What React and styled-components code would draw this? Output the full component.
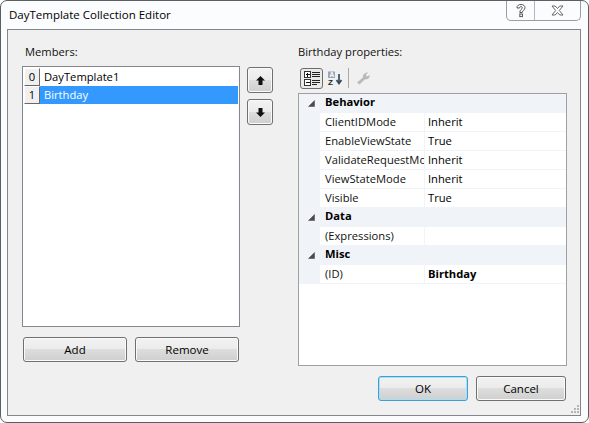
import React from 'react';
import styled, { createGlobalStyle } from 'styled-components';

const Global = createGlobalStyle`
  html, body { margin: 0; padding: 0; background: #fff; }
  * { box-sizing: border-box; }
  body { font-family: "Open Sans", "Noto Sans", "Liberation Sans", sans-serif; font-size: 11.2px; color: #000; }
`;

const Win = styled.div`
  width: 589px; height: 423px; display: flex; flex-direction: column; overflow: hidden;
  border: 1px solid #5c5f62; border-radius: 7px;
  background: #fbfcfd; padding: 0 7px 6px 6px;
`;
const TitleBar = styled.div`
  height: 28px; flex: none; display: flex; justify-content: space-between; align-items: flex-start;
`;
const Title = styled.div`font-size: 11.5px; line-height: 14px; padding: 7px 0 0 2px; white-space: nowrap;`;
const Caps = styled.div`
  display: flex; height: 20px; border: 1px solid #9a9da1; border-top: 0; border-radius: 0 0 5px 5px; background: #fbfcfd;
`;
const Cap = styled.div`
  width: ${p => p.$w}px; display: flex; align-items: center; justify-content: center;
  & + & { border-left: 1px solid #b4b7ba; }
`;
const Panel = styled.div`
  flex: 1; background: #f0f0f0; border: 1px solid #84878a; display: flex; flex-direction: column;
  padding: 15px 14px 14px 14px;
`;
const Main = styled.div`display: flex; height: 321px;`;
const Left = styled.div`width: 218px; display: flex; flex-direction: column; flex: none;`;
const Label = styled.div`font-size: 11.2px; line-height: 14px; height: 21px; padding-left: ${p => p.$pad || 0}px; color: #111;`;
const List = styled.div`
  width: 218px; height: 261px; flex: none; background: #fff; border: 1px solid #828790; padding: 1px;
`;
const Item = styled.div`display: flex; height: 18px; width: 214px;`;
const Index = styled.div`
  width: 16px; height: 18px; flex: none; background: #f0f0f0; text-align: center; line-height: 16px; font-size: 11.2px;
  border: 1px solid; border-color: #fff #696969 #696969 #fff;
`;
const ItemText = styled.div`
  flex: 1; padding-left: 4px; line-height: 17px; font-size: 11.2px; height: 18px;
  background: ${p => p.$sel ? '#3399ff' : '#fff'}; color: ${p => p.$sel ? '#fff' : '#000'};
`;
const Button = styled.div`
  width: ${p => p.$w}px; height: ${p => p.$h || 25}px; flex: none; display: flex; align-items: center; justify-content: center;
  font-size: 11.5px; border-radius: 3px; border: 1px solid ${p => p.$def ? '#3c9fd6' : '#707070'};
  background: linear-gradient(#f2f2f2 0, #ebebeb 50%, #dddddd 50%, #cfcfcf 100%);
  box-shadow: inset 0 0 0 1px ${p => p.$def ? '#a8e0f5' : '#fafafa'};
`;
const LeftButtons = styled.div`display: flex; gap: 8px; margin: 10px 0 0 1px;`;
const MoveColumn = styled.div`
  width: 26px; flex: none; margin: 22px 0 0 7px; display: flex; flex-direction: column; gap: 6px;
`;
const Right = styled.div`width: 269px; flex: none; margin-left: 25px; display: flex; flex-direction: column;`;
const Toolbar = styled.div`height: 24px; display: flex; align-items: center; gap: 1px; margin-bottom: 3px; padding-left: 2px; flex: none;`;
const ToolButton = styled.div`
  width: ${p => p.$w || 22}px; height: 21px; display: flex; align-items: center; justify-content: center;
  border: 1px solid ${p => p.$on ? '#6d6d6d' : 'transparent'}; border-radius: 3px;
  background: ${p => p.$on ? '#eaeaea' : 'transparent'};
`;
const ToolSep = styled.div`width: 1px; height: 20px; background: #a9a9a9; margin: 0 4px 0 1px;`;
const Grid = styled.div`
  width: 269px; height: 273px; flex: none; background: #fff; border: 1px solid #a0a0a0;
`;
const Cat = styled.div`
  height: 19px; display: flex; align-items: center; background: #f0f4f9; font-weight: 700; font-size: 11.2px; padding-bottom: 3px; line-height: 16px;
`;
const Arrow = styled.div`width: 26px; flex: none; display: flex; justify-content: center; padding: 2px 2px 0 0;`;
const Row = styled.div`display: flex; height: 19px; background: #f0f4f9;`;
const Gutter = styled.div`width: 21px; flex: none;`;
const NameCell = styled.div`
  width: 105px; flex: none; background: #fff; padding-left: 5px; line-height: 17px; font-size: 11.2px; overflow: hidden; white-space: nowrap;
  border-right: 1px solid #f0f4f9; border-bottom: 1px solid #f0f4f9; color: #111;
`;
const ValueCell = styled.div`
  flex: 1; background: #fff; padding-left: 3px; line-height: 17px; font-size: 11.2px; white-space: nowrap; font-weight: ${p => p.$b ? 700 : 400};
  border-bottom: 1px solid #f0f4f9;
`;
const FooterWrap = styled.div`position: relative; display: flex; justify-content: flex-end; gap: 8px; margin-top: 10px;`;
const Grip = styled.svg`position: absolute; right: -13px; bottom: -12px;`;

const Tri = () => <svg width="7" height="7" viewBox="0 0 7 7"><path d="M6.5 0.5V6.5H0.5Z" fill="#4a4a4a" stroke="#555" strokeWidth=".6" /></svg>;
const Up = () => <svg width="11" height="11" viewBox="0 0 11 11"><path d="M5.5 1L10 5.5H7.5V10H3.5V5.5H1Z" fill="#111" /></svg>;
const Down = () => <svg width="11" height="11" viewBox="0 0 11 11"><path d="M5.5 10L1 5.5H3.5V1H7.5V5.5H10Z" fill="#111" /></svg>;

const Categorized = () => (
  <svg width="16" height="15" viewBox="0 0 16 15" shapeRendering="crispEdges">
    <rect x=".5" y=".5" width="6" height="6" fill="#fff" stroke="#333" />
    <rect x=".5" y="8.5" width="6" height="6" fill="#fff" stroke="#333" />
    <path d="M2 3.5H5.5M3.5 2V5.5M2 11.5H5.5" stroke="#111" />
    <path d="M8 1.5H16M8 3.5H16M8 5.5H16M8 9.5H16M8 11.5H16M8 13.5H13" stroke="#222" />
  </svg>
);
const Sorted = () => (
  <svg width="16" height="15" viewBox="0 0 16 15">
    <rect x="1" y="0.5" width="7" height="6.5" fill="#9aa7b6" />
    <text x="2.5" y="6" fontSize="6.5" fontWeight="700" fontFamily="Liberation Sans" fill="#fff">A</text>
    <text x="1" y="14" fontSize="8" fontWeight="700" fontFamily="Liberation Sans" fill="#222">Z</text>
    <path d="M12 3V12M9.5 9L12 12.5L14.5 9" stroke="#3a4a5a" strokeWidth="1.7" fill="none" />
  </svg>
);
const Wrench = () => (
  <svg width="15" height="14" viewBox="0 0 15 14">
    <path d="M1 11.5L7 6.5C6.5 4 8.5 1.5 12 1.5L9.8 4L11 5.6L13.8 4C14 7 11.5 9 9 8.3L3.5 13.5Z" fill="#b9b9b9" />
  </svg>
);
const Help = () => <svg width="12" height="15" viewBox="0 0 12 15"><path d="M2 5C2 2.6 3.6 1.5 6 1.5S10 2.8 10 4.8C10 7 7.5 7.2 7.2 9.5H4.8C4.8 6.5 7.3 6.3 7.3 4.8C7.3 3.9 6.8 3.6 6 3.6C5 3.6 4.6 4.2 4.6 5Z" fill="#fff" stroke="#555" strokeWidth="1" /><rect x="4.8" y="11" width="2.6" height="2.6" fill="#fff" stroke="#555" strokeWidth="1" /></svg>;
const Close = () => <svg width="13" height="11" viewBox="0 0 13 11"><path d="M1 1H4.2L6.5 3.5L8.8 1H12L8.3 5.5L12 10H8.8L6.5 7.5L4.2 10H1L4.7 5.5Z" fill="#fff" stroke="#666" strokeWidth="1" /></svg>;

const props = [
  { cat: 'Behavior', rows: [['ClientIDMode', 'Inherit'], ['EnableViewState', 'True'], ['ValidateRequestMode', 'Inherit'], ['ViewStateMode', 'Inherit'], ['Visible', 'True']] },
  { cat: 'Data', rows: [['(Expressions)', '']] },
  { cat: 'Misc', rows: [['(ID)', 'Birthday', true]] },
];

export default function App() {
  return (
    <Win>
      <Global />
      <TitleBar>
        <Title>DayTemplate Collection Editor</Title>
        <Caps>
          <Cap $w={27}><Help /></Cap>
          <Cap $w={46}><Close /></Cap>
        </Caps>
      </TitleBar>
      <Panel>
        <Main>
          <Left>
            <Label $pad={3}>Members:</Label>
            <List>
              <Item><Index>0</Index><ItemText>DayTemplate1</ItemText></Item>
              <Item><Index>1</Index><ItemText $sel>Birthday</ItemText></Item>
            </List>
            <LeftButtons>
              <Button $w={104}>Add</Button>
              <Button $w={104}>Remove</Button>
            </LeftButtons>
          </Left>
          <MoveColumn>
            <Button $w={26} $h={26}><Up /></Button>
            <Button $w={26} $h={26}><Down /></Button>
          </MoveColumn>
          <Right>
            <Label>Birthday properties:</Label>
            <Toolbar>
              <ToolButton $on $w={23}><Categorized /></ToolButton>
              <ToolButton><Sorted /></ToolButton>
              <ToolSep />
              <ToolButton $w={18}><Wrench /></ToolButton>
            </Toolbar>
            <Grid>
              {props.map(g => (
                <React.Fragment key={g.cat}>
                  <Cat><Arrow><Tri /></Arrow>{g.cat}</Cat>
                  {g.rows.map(r => (
                    <Row key={r[0]}>
                      <Gutter />
                      <NameCell>{r[0]}</NameCell>
                      <ValueCell $b={r[2]}>{r[1]}</ValueCell>
                    </Row>
                  ))}
                </React.Fragment>
              ))}
            </Grid>
          </Right>
        </Main>
        <FooterWrap>
          <Button $w={90} $def>OK</Button>
          <Button $w={90}>Cancel</Button>
          <Grip width="8" height="8" viewBox="0 0 8 8">
            <path d="M6 0h2v2H6zM3 3h2v2H3zM6 3h2v2H6zM0 6h2v2H0zM3 6h2v2H3zM6 6h2v2H6z" fill="#b5b5b5" />
          </Grip>
        </FooterWrap>
      </Panel>
    </Win>
  );
}
